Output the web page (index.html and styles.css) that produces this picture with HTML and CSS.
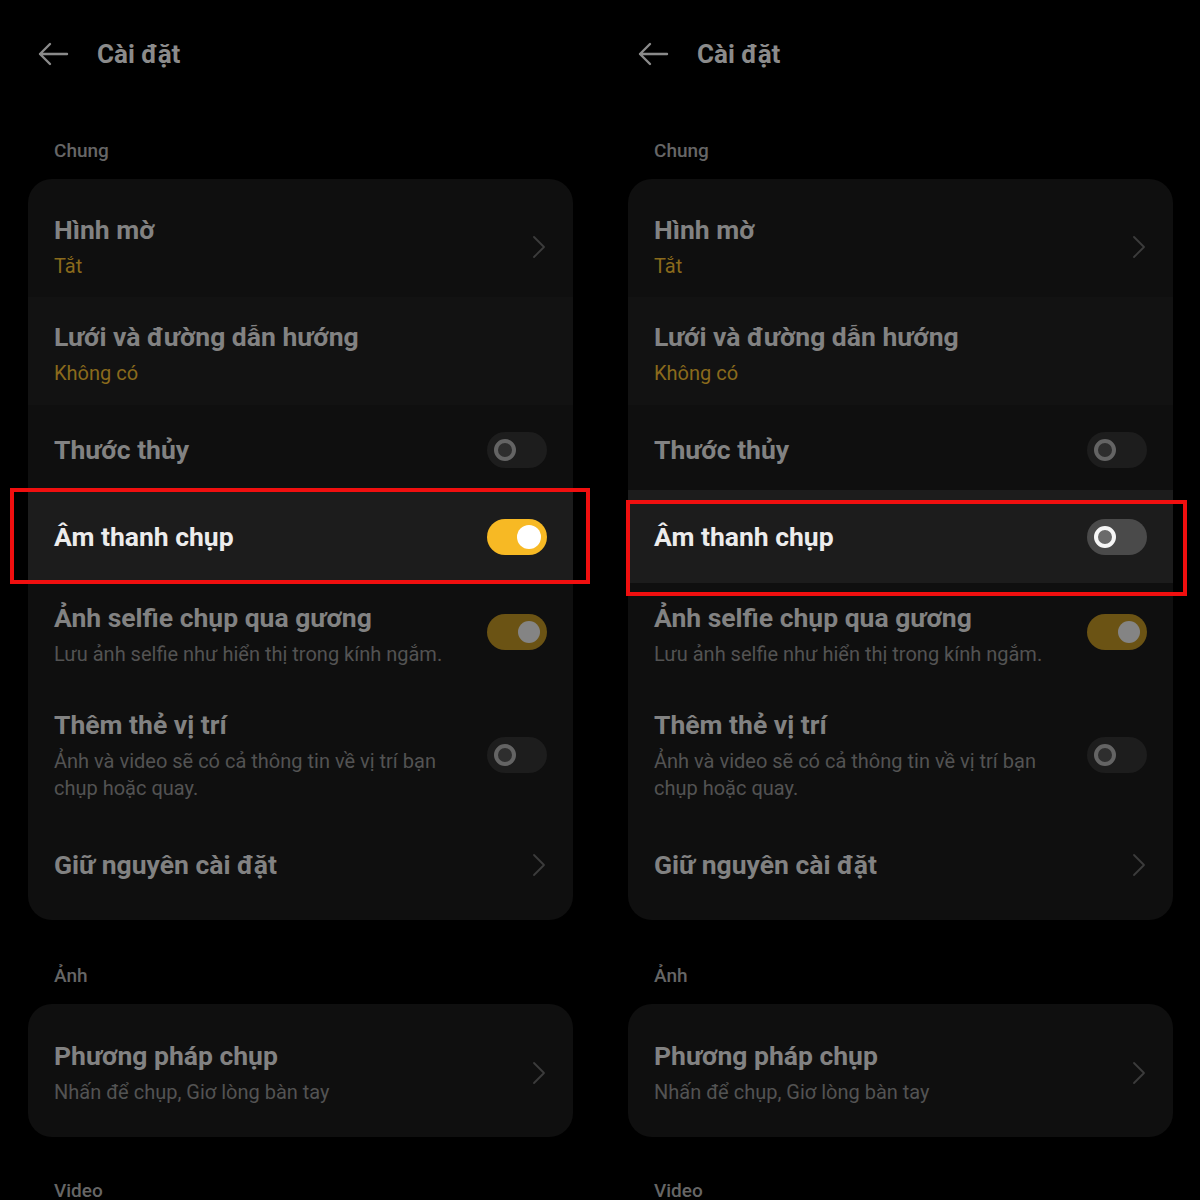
FILE: index.html
```html
<!DOCTYPE html>
<html lang="vi">
<head>
<meta charset="utf-8">
<title>Cài đặt</title>
<link rel="stylesheet" href="styles.css">
</head>
<body>
<div class="screens">
  <section class="panel">
    <header class="topbar">
      <svg class="back" width="32" height="24" viewBox="0 0 32 24"><path d="M30 12H3M13 2L3 12l10 10" fill="none" stroke="#8a8a8a" stroke-width="2.4" stroke-linecap="round" stroke-linejoin="round"/></svg>
      <h1 class="title">Cài đặt</h1>
    </header>
    <div class="label first">Chung</div>
    <div class="card">
      <div class="row r1">
        <div class="text"><div class="t">Hình mờ</div><div class="s gold">Tắt</div></div>
        <svg class="chev" width="14" height="24" viewBox="0 0 14 24"><path d="M2 2l10 10L2 22" fill="none" stroke="#3c3c3c" stroke-width="1.8" stroke-linecap="round" stroke-linejoin="round"/></svg>
      </div>
      <div class="row r2 lit">
        <div class="text"><div class="t">Lưới và đường dẫn hướng</div><div class="s gold">Không có</div></div>
      </div>
      <div class="row r3">
        <div class="text"><div class="t">Thước thủy</div></div>
        <div class="tog off"><span class="knob"></span></div>
      </div>
      <div class="row r4 hi">
        <div class="text"><div class="t bright">Âm thanh chụp</div></div>
        <div class="tog on"><span class="knob"></span></div>
      </div>
      <div class="row r5">
        <div class="text"><div class="t">Ảnh selfie chụp qua gương</div><div class="s">Lưu ảnh selfie như hiển thị trong kính ngắm.</div></div>
        <div class="tog dimon up"><span class="knob"></span></div>
      </div>
      <div class="row r6">
        <div class="text"><div class="t">Thêm thẻ vị trí</div><div class="s">Ảnh và video sẽ có cả thông tin về vị trí bạn<br>chụp hoặc quay.</div></div>
        <div class="tog off"><span class="knob"></span></div>
      </div>
      <div class="row r7">
        <div class="text"><div class="t">Giữ nguyên cài đặt</div></div>
        <svg class="chev" width="14" height="24" viewBox="0 0 14 24"><path d="M2 2l10 10L2 22" fill="none" stroke="#3c3c3c" stroke-width="1.8" stroke-linecap="round" stroke-linejoin="round"/></svg>
      </div>
    </div>
    <div class="label">Ảnh</div>
    <div class="card">
      <div class="row r8">
        <div class="text"><div class="t">Phương pháp chụp</div><div class="s">Nhấn để chụp, Giơ lòng bàn tay</div></div>
        <svg class="chev" width="14" height="24" viewBox="0 0 14 24"><path d="M2 2l10 10L2 22" fill="none" stroke="#3c3c3c" stroke-width="1.8" stroke-linecap="round" stroke-linejoin="round"/></svg>
      </div>
    </div>
    <div class="label last">Video</div>
    <div class="mark mark-left"></div>
  </section>

  <section class="panel">
    <header class="topbar">
      <svg class="back" width="32" height="24" viewBox="0 0 32 24"><path d="M30 12H3M13 2L3 12l10 10" fill="none" stroke="#8a8a8a" stroke-width="2.4" stroke-linecap="round" stroke-linejoin="round"/></svg>
      <h1 class="title">Cài đặt</h1>
    </header>
    <div class="label first">Chung</div>
    <div class="card">
      <div class="row r1">
        <div class="text"><div class="t">Hình mờ</div><div class="s gold">Tắt</div></div>
        <svg class="chev" width="14" height="24" viewBox="0 0 14 24"><path d="M2 2l10 10L2 22" fill="none" stroke="#3c3c3c" stroke-width="1.8" stroke-linecap="round" stroke-linejoin="round"/></svg>
      </div>
      <div class="row r2 lit">
        <div class="text"><div class="t">Lưới và đường dẫn hướng</div><div class="s gold">Không có</div></div>
      </div>
      <div class="row r3">
        <div class="text"><div class="t">Thước thủy</div></div>
        <div class="tog off"><span class="knob"></span></div>
      </div>
      <div class="row r4 hi">
        <div class="text"><div class="t bright">Âm thanh chụp</div></div>
        <div class="tog offhi"><span class="knob"></span></div>
      </div>
      <div class="row r5">
        <div class="text"><div class="t">Ảnh selfie chụp qua gương</div><div class="s">Lưu ảnh selfie như hiển thị trong kính ngắm.</div></div>
        <div class="tog dimon up"><span class="knob"></span></div>
      </div>
      <div class="row r6">
        <div class="text"><div class="t">Thêm thẻ vị trí</div><div class="s">Ảnh và video sẽ có cả thông tin về vị trí bạn<br>chụp hoặc quay.</div></div>
        <div class="tog off"><span class="knob"></span></div>
      </div>
      <div class="row r7">
        <div class="text"><div class="t">Giữ nguyên cài đặt</div></div>
        <svg class="chev" width="14" height="24" viewBox="0 0 14 24"><path d="M2 2l10 10L2 22" fill="none" stroke="#3c3c3c" stroke-width="1.8" stroke-linecap="round" stroke-linejoin="round"/></svg>
      </div>
    </div>
    <div class="label">Ảnh</div>
    <div class="card">
      <div class="row r8">
        <div class="text"><div class="t">Phương pháp chụp</div><div class="s">Nhấn để chụp, Giơ lòng bàn tay</div></div>
        <svg class="chev" width="14" height="24" viewBox="0 0 14 24"><path d="M2 2l10 10L2 22" fill="none" stroke="#3c3c3c" stroke-width="1.8" stroke-linecap="round" stroke-linejoin="round"/></svg>
      </div>
    </div>
    <div class="label last">Video</div>
    <div class="mark mark-right"></div>
  </section>
</div>
</body>
</html>
```
FILE: styles.css
```css
html, body {
  margin: 0;
  padding: 0;
  background: #000;
}
body {
  width: 1200px;
  height: 1200px;
  overflow: hidden;
  font-family: Roboto, "Noto Sans", "Liberation Sans", sans-serif;
}
.screens {
  display: grid;
  grid-template-columns: 600px 600px;
}
.panel {
  position: relative;
  padding: 0 27px 0 28px;
  height: 1200px;
  overflow: hidden;
}
.topbar {
  height: 108px;
  display: flex;
  align-items: center;
  padding-left: 9px;
}
.back {
  display: block;
}
.title {
  margin: 0 0 0 28px;
  font-size: 26px;
  font-weight: 700;
  color: #8b8b8b;
  line-height: 34px;
}
.label {
  margin: 44px 0 16px 26px;
  font-size: 19px;
  line-height: 24px;
  font-weight: 500;
  color: #666666;
}
.label.first {
  margin-top: 31px;
}
.label.last {
  margin-top: 42px;
}
.card {
  background: #0f0f0f;
  border-radius: 24px;
  overflow: hidden;
}
.row {
  display: flex;
  align-items: center;
  justify-content: space-between;
  padding-left: 26px;
  padding-right: 26px;
}
.row.lit { background: #121212; }
.row.hi { background: #1c1c1c; }
.text { min-width: 0; }
.t {
  font-size: 26.5px;
  line-height: 34px;
  font-weight: 700;
  color: #828282;
}
.t.bright { color: #ececec; }
.s {
  margin-top: 6px;
  font-size: 20px;
  line-height: 27px;
  color: #535353;
}
.s.gold { color: #8a6a1c; }
.r1 { padding-top: 34px; padding-bottom: 17px; }
.r2 { padding-top: 23px; padding-bottom: 18px; }
.r3 { padding-top: 27px; padding-bottom: 22px; }
.r4 { padding-top: 29px; padding-bottom: 28px; }
.r5 { padding-top: 18px; padding-bottom: 22px; }
.r6 { padding-top: 18px; padding-bottom: 18px; }
.r7 { padding-top: 28px; padding-bottom: 38px; }
.r8 { padding-top: 35px; padding-bottom: 31px; }
.chev {
  display: block;
  margin-right: 1px;
}
.tog {
  flex: none;
  width: 60px;
  height: 36px;
  border-radius: 18px;
  display: flex;
  align-items: center;
  box-sizing: border-box;
}
.tog.up {
  margin-bottom: 5px;
}
.knob {
  display: block;
  box-sizing: border-box;
  border-radius: 50%;
}
.tog.off {
  background: #1d1d1d;
  padding-left: 7px;
}
.tog.off .knob {
  width: 22px;
  height: 22px;
  border: 4px solid #646464;
  background: #2e2e2e;
}
.tog.offhi {
  background: #4a4a4a;
  padding-left: 7px;
}
.tog.offhi .knob {
  width: 22px;
  height: 22px;
  border: 4px solid #f6f6f6;
  background: #6a6a6a;
}
.tog.on {
  background: #f7b924;
  justify-content: flex-end;
  padding-right: 6px;
}
.tog.on .knob {
  width: 24px;
  height: 24px;
  background: #ffffff;
}
.tog.dimon {
  background: #6b5314;
  justify-content: flex-end;
  padding-right: 7px;
}
.tog.dimon .knob {
  width: 22px;
  height: 22px;
  background: #848484;
}
.mark {
  position: absolute;
  border: 4px solid #f00f0f;
  box-sizing: border-box;
  height: 96px;
}
.mark-left {
  left: 10px;
  top: 488px;
  width: 580px;
}
.mark-right {
  left: 26px;
  top: 500px;
  width: 561px;
}
```
